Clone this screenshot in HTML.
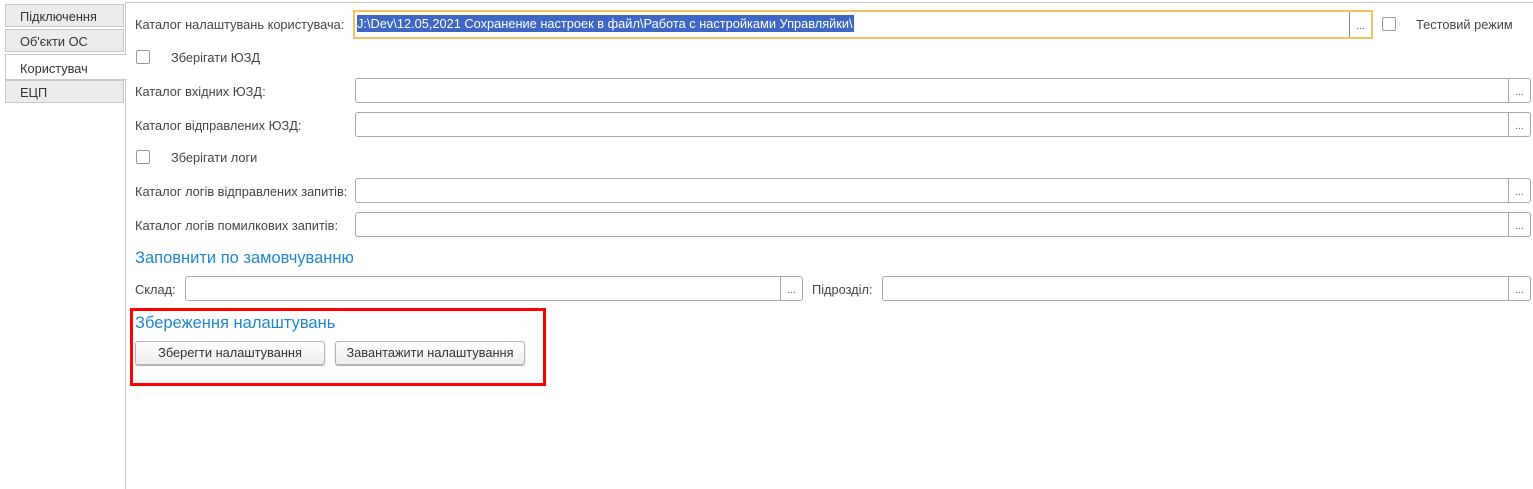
<!DOCTYPE html>
<html><head><meta charset="utf-8"><style>
body{margin:0;width:1533px;height:489px;background:#fff;font-family:"Liberation Sans",Arial,sans-serif;font-size:12.8px;color:#404040;position:relative;overflow:hidden}
.a{position:absolute}
.tab{position:absolute;left:5px;width:119px;height:23px;background:#ececec;border:1px solid #c8c8c8;box-sizing:border-box;padding:4px 0 0 14px;font-size:12.8px;color:#333}
.inp{position:absolute;border:1px solid #a8a8a8;border-radius:3px;box-sizing:border-box;height:25px;background:#fff}
.inp .b{position:absolute;right:0;top:0;bottom:0;width:21px;border-left:1px solid #a8a8a8;text-align:center;font-size:10px;line-height:28px;color:#555}
.cb{position:absolute;width:14px;height:14px;border:1px solid #999;border-radius:2px;box-sizing:border-box;background:#fff}
.lbl{position:absolute;font-size:12.8px;color:#444}
.h{position:absolute;font-size:16.5px;color:#1e87cf}
.btn{position:absolute;height:24px;border:1px solid #b4b4b4;border-radius:3px;box-sizing:border-box;background:linear-gradient(#fff,#ececec);box-shadow:0 1px 1px #aaa;text-align:center;line-height:22px;font-size:12.8px;color:#333}
</style></head><body>
<div class="a" style="left:125px;top:2px;width:1408px;height:1px;background:#c8c8c8"></div>
<div class="a" style="left:125px;top:2px;width:1px;height:487px;background:#c8c8c8"></div>
<div class="tab" style="top:4px">Підключення</div>
<div class="tab" style="top:29px">Об'єкти ОС</div>
<div class="tab" style="top:54px;width:122px;background:#fff;border-right:none;height:26px;padding-top:6px">Користувач</div>
<div class="tab" style="top:80px">ЕЦП</div>

<div class="lbl" style="left:135px;top:17px">Каталог налаштувань користувача:</div>
<div class="inp" style="left:353px;top:10px;width:1020px;height:29px;border:2px solid #f6c064;border-radius:0">
<div class="a" style="left:2px;top:3px;width:497px;height:17px;background:#3e66c4;color:#fff;font-size:12.8px;line-height:17px;white-space:nowrap">J:\Dev\12.05,2021 Сохранение настроек в файл\Работа с настройками Управляйки\</div>
<div class="b" style="border-left-color:#888;line-height:30px">...</div></div>
<div class="cb" style="left:1382px;top:17px"></div>
<div class="lbl" style="left:1416px;top:17px">Тестовий режим</div>

<div class="cb" style="left:136px;top:50px"></div>
<div class="lbl" style="left:171px;top:50px">Зберігати ЮЗД</div>
<div class="lbl" style="left:135px;top:84px">Каталог вхідних ЮЗД:</div>
<div class="inp" style="left:355px;top:78px;width:1176px"><div class="b">...</div></div>
<div class="lbl" style="left:135px;top:118px">Каталог відправлених ЮЗД:</div>
<div class="inp" style="left:355px;top:112px;width:1176px"><div class="b">...</div></div>
<div class="cb" style="left:136px;top:150px"></div>
<div class="lbl" style="left:171px;top:150px">Зберігати логи</div>
<div class="lbl" style="left:135px;top:184px">Каталог логів відправлених запитів:</div>
<div class="inp" style="left:355px;top:178px;width:1176px"><div class="b">...</div></div>
<div class="lbl" style="left:135px;top:218px">Каталог логів помилкових запитів:</div>
<div class="inp" style="left:355px;top:212px;width:1176px"><div class="b">...</div></div>
<div class="h" style="left:135px;top:249px">Заповнити по замовчуванню</div>
<div class="lbl" style="left:135px;top:282px">Склад:</div>
<div class="inp" style="left:185px;top:276px;width:618px"><div class="b">...</div></div>
<div class="lbl" style="left:812px;top:282px">Підрозділ:</div>
<div class="inp" style="left:882px;top:276px;width:649px"><div class="b">...</div></div>

<div class="a" style="left:130px;top:308px;width:416px;height:78px;border:3px solid #f00;box-sizing:border-box"></div>
<div class="h" style="left:135px;top:314px">Збереження налаштувань</div>
<div class="btn" style="left:135px;top:341px;width:190px">Зберегти налаштування</div>
<div class="btn" style="left:335px;top:341px;width:190px">Завантажити налаштування</div>
</body></html>
